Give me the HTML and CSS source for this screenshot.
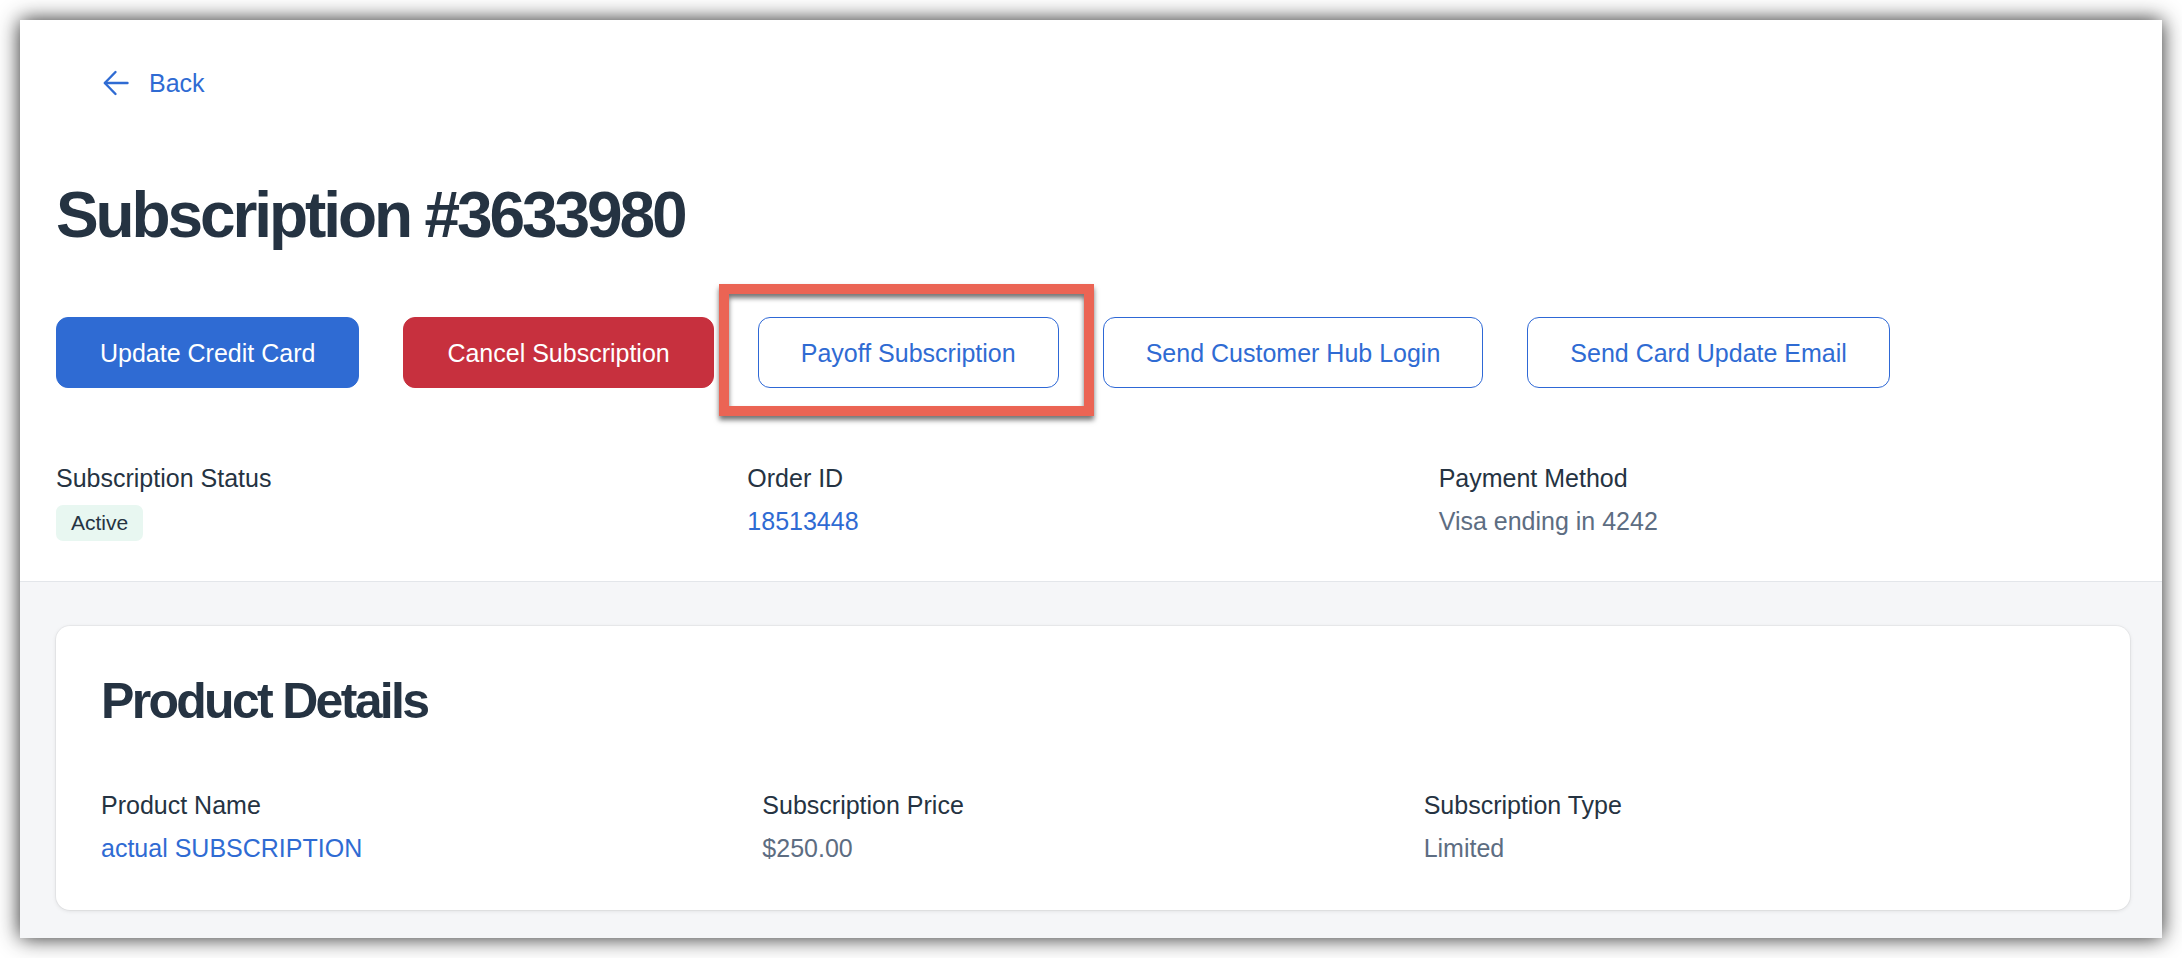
FILE: index.html
```html
<!DOCTYPE html>
<html lang="en">
<head>
<meta charset="utf-8">
<title>Subscription #3633980</title>
<link rel="stylesheet" href="styles.css">
</head>
<body>
<div class="window">
  <div class="top">
    <a class="back" href="#">
      <svg class="back-icon" width="26" height="26" viewBox="0 0 26 26" fill="none" stroke="currentColor" stroke-width="2.4" stroke-linecap="round" stroke-linejoin="round">
        <line x1="24.5" y1="13" x2="2" y2="13"/>
        <polyline points="12.5,2 1.8,13 12.5,24"/>
      </svg>
      <span>Back</span>
    </a>
    <h1 class="title">Subscription #3633980</h1>
    <div class="actions">
      <button class="btn btn-primary">Update Credit Card</button>
      <button class="btn btn-danger">Cancel Subscription</button>
      <button class="btn btn-outline">Payoff Subscription</button>
      <button class="btn btn-outline">Send Customer Hub Login</button>
      <button class="btn btn-outline">Send Card Update Email</button>
    </div>
    <div class="info">
      <div class="field">
        <div class="label">Subscription Status</div>
        <div class="value"><span class="badge">Active</span></div>
      </div>
      <div class="field">
        <div class="label">Order ID</div>
        <div class="value link">18513448</div>
      </div>
      <div class="field">
        <div class="label">Payment Method</div>
        <div class="value muted">Visa ending in 4242</div>
      </div>
    </div>
  </div>
  <div class="bottom">
    <div class="card">
      <h2 class="card-title">Product Details</h2>
      <div class="card-grid">
        <div class="field">
          <div class="label">Product Name</div>
          <div class="value link">actual SUBSCRIPTION</div>
        </div>
        <div class="field">
          <div class="label">Subscription Price</div>
          <div class="value muted">$250.00</div>
        </div>
        <div class="field">
          <div class="label">Subscription Type</div>
          <div class="value muted">Limited</div>
        </div>
      </div>
    </div>
  </div>
  <div class="annotation"></div>
</div>
</body>
</html>
```
FILE: styles.css
```css
* { box-sizing: border-box; }

html, body {
  margin: 0;
  padding: 0;
  background: #ffffff;
}

body {
  font-family: "Liberation Sans", Arial, Helvetica, sans-serif;
  color: #253342;
  padding: 20px;
}

.window {
  position: relative;
  width: 2142px;
  height: 918px;
  background: #ffffff;
  box-shadow: 0 0 20px 0 rgba(0, 0, 0, 0.85);
  display: flex;
  flex-direction: column;
}

.top {
  padding: 48px 32px 42px 36px;
  border-bottom: 1px solid #e3e6ea;
  background: #ffffff;
}

.back {
  display: inline-flex;
  align-items: center;
  height: 30px;
  margin-left: 47px;
  gap: 20px;
  color: #2f6bd3;
  text-decoration: none;
  font-size: 25px;
  line-height: 30px;
}

.back-icon { display: block; }

.title {
  margin: 77px 0 0 0;
  font-size: 64px;
  line-height: 77px;
  font-weight: 700;
  letter-spacing: -3.1px;
  color: #253342;
}

.actions {
  margin-top: 63px;
  display: flex;
  gap: 44px;
}

.btn {
  height: 71px;
  padding: 0 43px;
  border-radius: 12px;
  border: 1px solid #2f6bd3;
  font-family: "Liberation Sans", Arial, Helvetica, sans-serif;
  font-size: 25px;
  line-height: 30px;
  display: inline-flex;
  align-items: center;
  justify-content: center;
  white-space: nowrap;
  cursor: pointer;
}

.btn-primary {
  background: #2f6bd3;
  border-color: #2f6bd3;
  color: #ffffff;
}

.btn-danger {
  background: #c7303e;
  border-color: #c7303e;
  color: #ffffff;
}

.btn-outline {
  padding: 0 42px;
  background: #ffffff;
  color: #2f6bd3;
  border-color: #2e68d6;
}

.info {
  margin-top: 75px;
  display: grid;
  grid-template-columns: repeat(3, 1fr);
}

.field {
  display: flex;
  flex-direction: column;
  align-items: flex-start;
}

.label {
  font-size: 25px;
  line-height: 30px;
  color: #253342;
}

.value {
  margin-top: 10px;
  font-size: 25px;
  line-height: 36px;
  height: 36px;
  color: #253342;
}

.value.link { color: #2f6bd3; }
.value.muted { color: #5d6d82; }

.badge {
  display: inline-block;
  height: 36px;
  padding: 0 15px;
  border-radius: 7px;
  background: #e8f7f1;
  color: #253342;
  font-size: 21px;
  line-height: 36px;
}

.bottom {
  flex: 1;
  background: #f5f6f8;
  padding: 44px 32px 0 36px;
}

.card {
  background: #ffffff;
  border-radius: 14px;
  box-shadow: 0 1px 4px rgba(0, 0, 0, 0.10), 0 0 0 1px rgba(0, 0, 0, 0.035);
  padding: 45px 45px 44px 45px;
}

.card-title {
  margin: 0;
  font-size: 50px;
  line-height: 60px;
  font-weight: 700;
  letter-spacing: -2.7px;
  color: #253342;
}

.card-grid {
  margin-top: 59px;
  display: grid;
  grid-template-columns: repeat(3, 1fr);
}

.annotation {
  position: absolute;
  left: 699px;
  top: 264px;
  width: 375px;
  height: 132px;
  border: 10px solid #eb6454;
  box-shadow: 0 4px 5px rgba(0, 0, 0, 0.55), inset 0 4px 5px rgba(0, 0, 0, 0.55);
  pointer-events: none;
}
```
